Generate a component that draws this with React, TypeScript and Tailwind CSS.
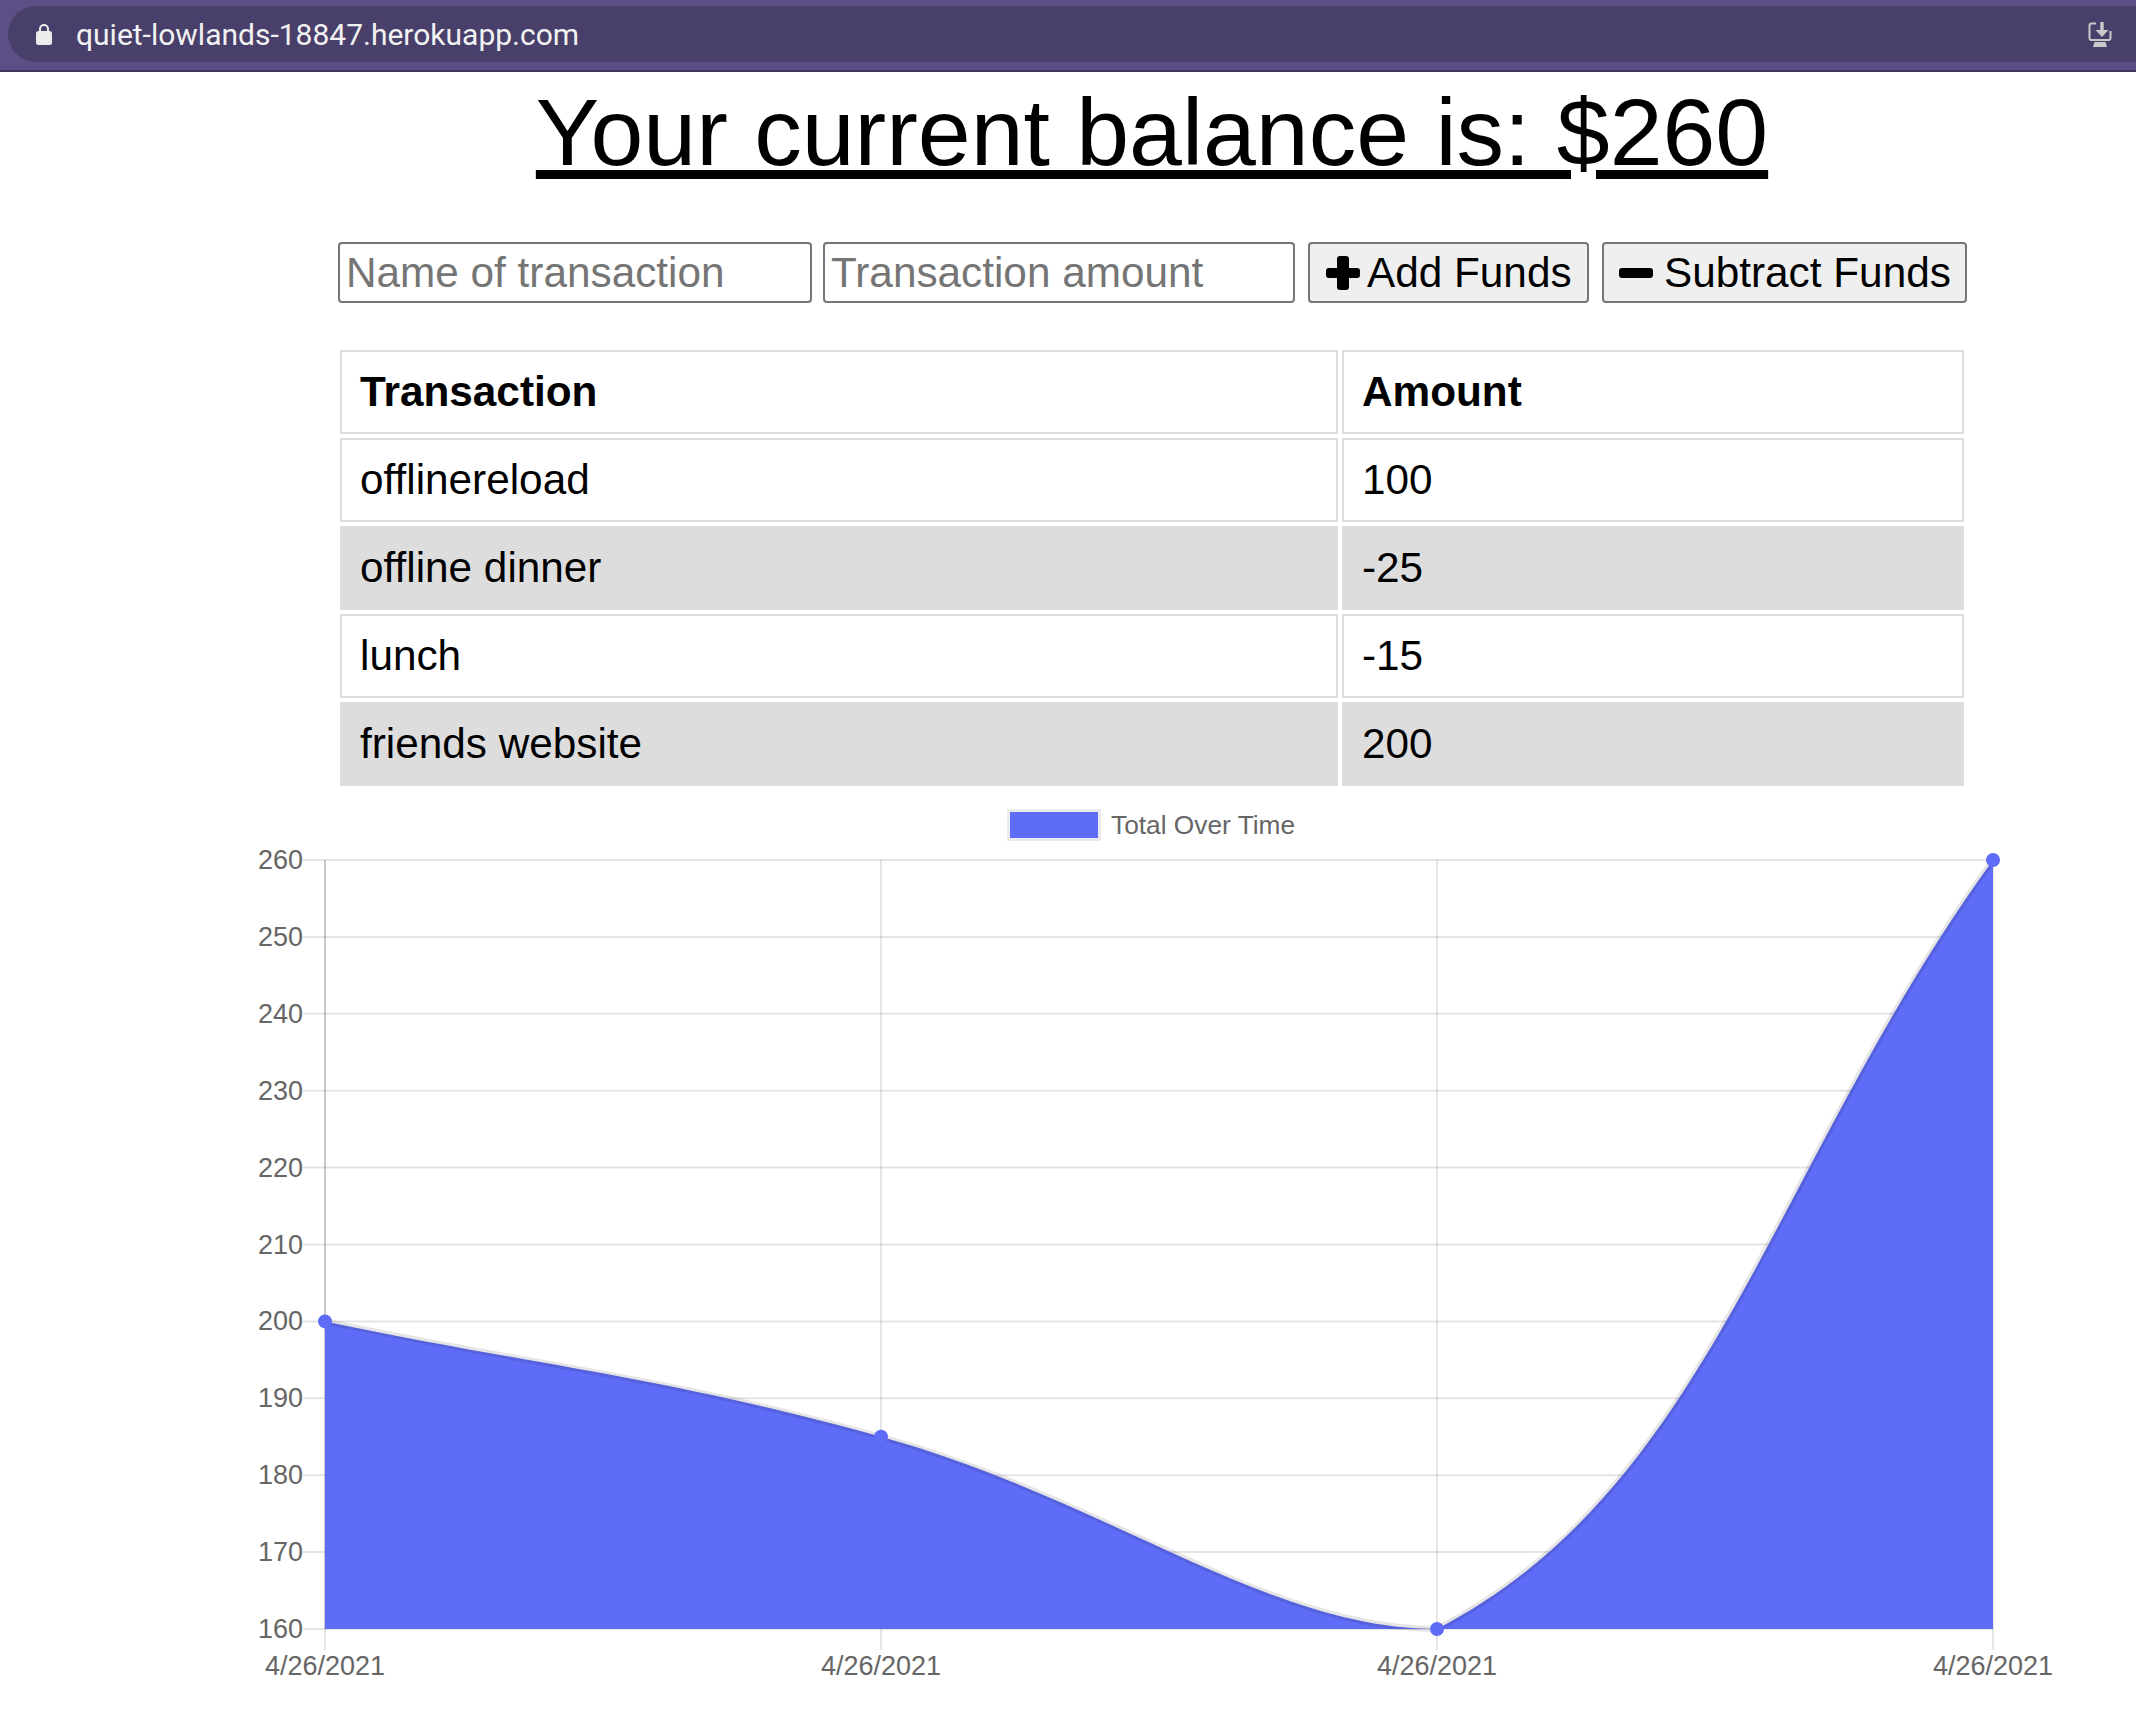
const FONT = '"Liberation Sans", Arial, sans-serif';

const pts = [
  { x: 325, y: 1321.4 },
  { x: 881, y: 1436.8 },
  { x: 1437, y: 1629 },
  { x: 1993, y: 860 },
];

function curve(): string {
  const t = 0.4;
  const ctrl = pts.map((p, i) => {
    const prev = pts[Math.max(i - 1, 0)];
    const next = pts[Math.min(i + 1, pts.length - 1)];
    const d01 = Math.hypot(p.x - prev.x, p.y - prev.y);
    const d12 = Math.hypot(next.x - p.x, next.y - p.y);
    const s01 = d01 / (d01 + d12 || 1);
    const s12 = d12 / (d01 + d12 || 1);
    return {
      px: p.x - t * s01 * (next.x - prev.x),
      py: p.y - t * s01 * (next.y - prev.y),
      nx: p.x + t * s12 * (next.x - prev.x),
      ny: p.y + t * s12 * (next.y - prev.y),
    };
  });
  let d = `M${pts[0].x} ${pts[0].y}`;
  for (let i = 1; i < pts.length; i++) {
    const cy1 = Math.min(ctrl[i - 1].ny, 1629);
    const cy2 = Math.max(Math.min(ctrl[i].py, 1629), 860);
    d += ` C${ctrl[i - 1].nx} ${cy1} ${ctrl[i].px} ${cy2} ${pts[i].x} ${pts[i].y}`;
  }
  return d;
}

const rows = [
  ["offlinereload", "100", false],
  ["offline dinner", "-25", true],
  ["lunch", "-15", false],
  ["friends website", "200", true],
] as const;

const ticks = [260, 250, 240, 230, 220, 210, 200, 190, 180, 170, 160];

function Chart() {
  const d = curve();
  const Y0 = 790;
  return (
    <svg width={2136} height={924} viewBox={`0 ${Y0} 2136 924`} className="block mt-[4px]">
      <g stroke="rgba(0,0,0,0.1)" strokeWidth={2}>
        {ticks.map((t, i) => {
          const y = 860 + i * 76.9;
          return <line key={t} x1={303} x2={1993} y1={y} y2={y} />;
        })}
        {pts.map((p) => (
          <line key={p.x} x1={p.x} x2={p.x} y1={860} y2={1650} />
        ))}
        <line x1={325} x2={325} y1={860} y2={1629} stroke="rgba(0,0,0,0.12)" />
      </g>
      <path d={`${d} L1993 1629 L325 1629 Z`} fill="#5f6cf7" />
      <path d={d} fill="none" stroke="rgba(0,0,0,0.1)" strokeWidth={6} />
      {pts.map((p) => (
        <circle key={p.x} cx={p.x} cy={p.y} r={7} fill="#5f6cf7" />
      ))}
      <g fill="#666" fontSize={27} fontFamily={FONT}>
        {ticks.map((t, i) => (
          <text key={t} x={303} y={860 + i * 76.9 + 9} textAnchor="end">
            {t}
          </text>
        ))}
        {pts.map((p) => (
          <text key={p.x} x={p.x} y={1675} textAnchor="middle">
            4/26/2021
          </text>
        ))}
        <text x={1111} y={834} fontSize={26.3}>Total Over Time</text>
      </g>
      <rect x={1007} y={809} width={94} height={32} fill="#ebebeb" />
      <rect x={1010} y={812} width={88} height={26} fill="#5f6cf7" />
    </svg>
  );
}

export default function App() {
  return (
    <div className="w-[2136px] h-[1714px] bg-white overflow-hidden text-black" style={{ fontFamily: FONT }}>
      <div className="h-[72px] bg-[#5c4f85] border-b-2 border-[#3c3558] pt-[6px]">
        <div className="h-[56px] ml-[8px] rounded-l-[28px] bg-[#48406a] flex items-center pl-[28px] pr-[24px]">
          <svg width={16} height={22} viewBox="0 0 16 22" className="shrink-0">
            <path d="M4 9V6a4 4 0 0 1 8 0v3" fill="none" stroke="#ececec" strokeWidth={2} />
            <rect x={0} y={8} width={16} height={14} rx={2.5} fill="#ececec" />
          </svg>
          <span className="ml-[24px] text-[30px] text-[#f2f2f2]" style={{ fontFamily: 'Roboto, sans-serif' }}>
            quiet-lowlands-18847.herokuapp.com
          </span>
          <svg width={24} height={25} viewBox="0 0 24 25" className="ml-auto shrink-0" fill="none" stroke="#c9c9c9" strokeWidth={2}>
            <path d="M8 1.500H3.500Q1.500 1.500 1.500 3.500V16Q1.500 18 3.500 18H20.500Q22.500 18 22.500 16V9" />
            <path d="M14 0V9" strokeWidth={3.4} />
            <path d="M7.500 8H20.500L14 15Z" fill="#c9c9c9" stroke="none" />
            <path d="M5 25L6.500 20H17.500L19 25Z" fill="#c9c9c9" stroke="none" />
          </svg>
        </div>
      </div>
      <h1 className="text-center text-[95px] leading-[110px] underline mt-[5px] font-normal pl-[168px]">
        Your current balance is: $260
      </h1>
      <div className="flex mt-[55px] ml-[338px] text-[42.3px] h-[61px]">
        <div className="w-[474px] h-full border-2 border-[#767676] rounded-[4px] px-[6px] pt-[1px] flex items-center text-[#757575]">Name of transaction</div>
        <div className="w-[472px] h-full ml-[11px] border-2 border-[#767676] rounded-[4px] px-[6px] pt-[1px] flex items-center text-[#757575]">Transaction amount</div>
        <div className="w-[281px] h-full ml-[13px] border-2 border-[#767676] rounded-[4px] bg-[#efefef] flex items-center pl-[16px]">
          <svg width={34} height={34} viewBox="0 0 34 34" className="shrink-0">
            <rect x={11} y={0} width={12} height={34} rx={3} />
            <rect x={0} y={12} width={34} height={10} rx={3} />
          </svg>
          <span className="ml-[7px] pt-[1px]">Add Funds</span>
        </div>
        <div className="w-[365px] h-full ml-[13px] border-2 border-[#767676] rounded-[4px] bg-[#efefef] flex items-center pl-[15px]">
          <svg width={34} height={34} viewBox="0 0 34 34" className="shrink-0">
            <rect x={0} y={12} width={34} height={10} rx={3} />
          </svg>
          <span className="ml-[11px] pt-[1px]">Subtract Funds</span>
        </div>
      </div>
      <div className="ml-[340px] w-[1624px] mt-[47px] grid grid-cols-[998px_622px] gap-[4px] text-[42.3px]">
        <div className="h-[84px] border-2 border-[#dddddd] pl-[18px] flex items-center font-bold">Transaction</div>
        <div className="h-[84px] border-2 border-[#dddddd] pl-[18px] flex items-center font-bold">Amount</div>
        {rows.map(([a, b, g]) => (
          <div key={a} className="contents">
            <div className={g ? "h-[84px] bg-[#dddddd] pl-[20px] flex items-center" : "h-[84px] border-2 border-[#dddddd] pl-[18px] flex items-center"}>{a}</div>
            <div className={g ? "h-[84px] bg-[#dddddd] pl-[20px] flex items-center" : "h-[84px] border-2 border-[#dddddd] pl-[18px] flex items-center"}>{b}</div>
          </div>
        ))}
      </div>
      <Chart />
    </div>
  );
}
